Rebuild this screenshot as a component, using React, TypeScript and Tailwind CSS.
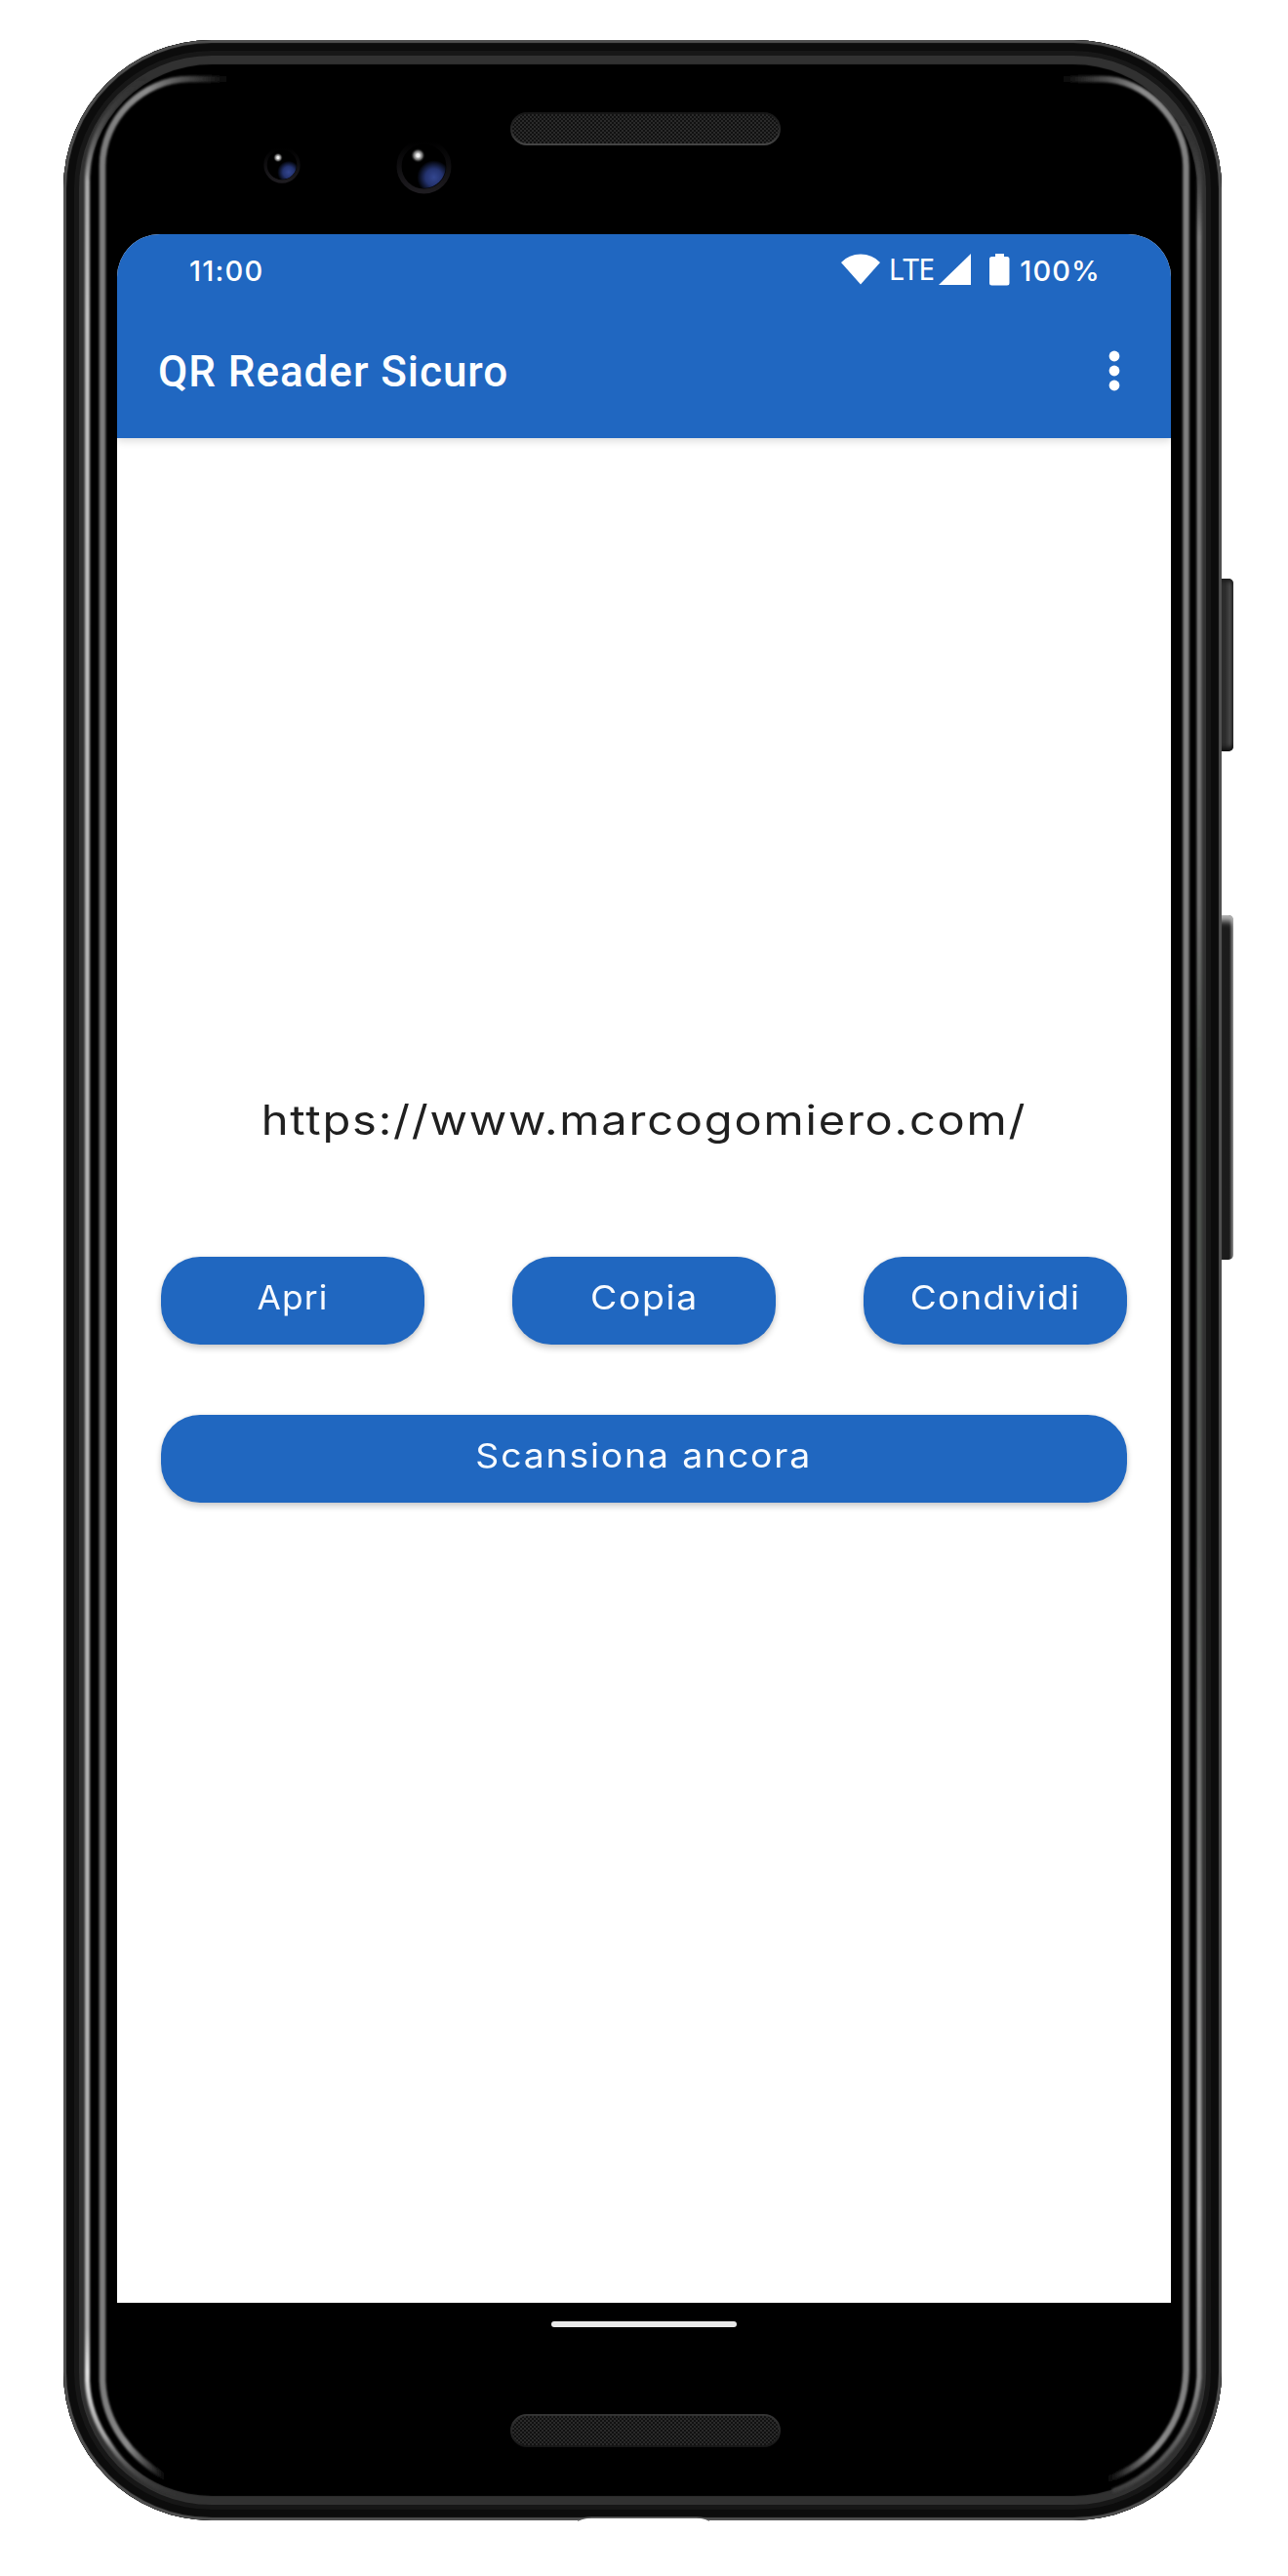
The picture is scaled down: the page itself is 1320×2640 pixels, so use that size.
import React from "react";

const highlight = {
  outerLeft: "M150 80 Q124 95 106 124 Q91 150 89.5 182 V2440 Q91 2474 112 2504 Q138 2544 180 2556",
  innerLeft: "M105 1305 V170 C105 122 146 81 194 81 H236",
  innerLeftLow: "M105 1305 V2440 C107 2484 134 2518 170 2539",
  innerRight: "M1215.5 1305 V170 C1215 122 1172 81 1130 81 H1086",
  innerRightLow: "M1215.5 1305 V2430 C1214 2484 1180 2526 1134 2541",
  outerRight: "M1210 124 Q1227 150 1229 182 V2436 Q1226 2478 1200 2510 Q1176 2540 1140 2553",
};

function FrameHighlights() {
  return (
    <svg className="pointer-events-none absolute left-0 top-0" width="1320" height="2640" viewBox="0 0 1320 2640" fill="none" aria-hidden="true">
      <defs>
        <filter id="soft" x="0" y="0" width="1320" height="2640" filterUnits="userSpaceOnUse">
          <feGaussianBlur stdDeviation="1" />
        </filter>
        <linearGradient id="ol" gradientUnits="userSpaceOnUse" x1="0" y1="75" x2="0" y2="2560">
          <stop offset="0" stopColor="#303030" stopOpacity="0" />
          <stop offset="0.045" stopColor="#a8a8a8" />
          <stop offset="0.1" stopColor="#c0c0c0" />
          <stop offset="0.4" stopColor="#b4b4b4" />
          <stop offset="0.93" stopColor="#b0b0b0" />
          <stop offset="0.948" stopColor="#e2e2e2" />
          <stop offset="0.975" stopColor="#a0a0a0" />
          <stop offset="1" stopColor="#404040" stopOpacity="0" />
        </linearGradient>
        <linearGradient id="or" gradientUnits="userSpaceOnUse" x1="0" y1="120" x2="0" y2="2560">
          <stop offset="0" stopColor="#303030" stopOpacity="0" />
          <stop offset="0.05" stopColor="#7a7a7a" />
          <stop offset="0.33" stopColor="#727272" />
          <stop offset="0.4" stopColor="#4c514c" />
          <stop offset="0.6" stopColor="#585a58" />
          <stop offset="0.88" stopColor="#aaaaaa" />
          <stop offset="0.95" stopColor="#888888" />
          <stop offset="1" stopColor="#3a3a3a" />
        </linearGradient>
        <linearGradient id="glassL" gradientUnits="userSpaceOnUse" x1="105" y1="0" x2="236" y2="0">
          <stop offset="0" stopColor="#7c7c7c" />
          <stop offset="0.35" stopColor="#8c8c8c" />
          <stop offset="0.65" stopColor="#4a4a4a" />
          <stop offset="1" stopColor="#000000" />
        </linearGradient>
        <linearGradient id="glassR" gradientUnits="userSpaceOnUse" x1="1215" y1="0" x2="1086" y2="0">
          <stop offset="0" stopColor="#808080" />
          <stop offset="0.35" stopColor="#8c8c8c" />
          <stop offset="0.65" stopColor="#4a4a4a" />
          <stop offset="1" stopColor="#000000" />
        </linearGradient>
        <linearGradient id="glassBL" gradientUnits="userSpaceOnUse" x1="105" y1="0" x2="170" y2="0">
          <stop offset="0" stopColor="#7c7c7c" />
          <stop offset="0.4" stopColor="#8a8a8a" />
          <stop offset="1" stopColor="#000000" />
        </linearGradient>
        <linearGradient id="glassBR" gradientUnits="userSpaceOnUse" x1="1215" y1="0" x2="1134" y2="0">
          <stop offset="0" stopColor="#808080" />
          <stop offset="0.4" stopColor="#8a8a8a" />
          <stop offset="1" stopColor="#000000" />
        </linearGradient>
      </defs>
      <g filter="url(#soft)">
        <path d={highlight.outerLeft} stroke="url(#ol)" strokeWidth="5" />
        <path d={highlight.outerRight} stroke="url(#or)" strokeWidth="5" />
        <path d={highlight.innerLeft} stroke="url(#glassL)" strokeWidth="6.5" />
        <path d={highlight.innerLeftLow} stroke="url(#glassBL)" strokeWidth="6.5" />
        <path d={highlight.innerRight} stroke="url(#glassR)" strokeWidth="6.5" />
        <path d={highlight.innerRightLow} stroke="url(#glassBR)" strokeWidth="6.5" />
      </g>
      {/* USB port notch */}
      <path d="M592 2583.5 Q598 2580.5 606 2580.5 H714 Q722 2580.5 727 2583.5 V2586 H592 Z" fill="#ffffff" />
      <path d="M592 2583 Q598 2580 606 2580 H714 Q722 2580 727 2583" stroke="#555555" strokeWidth="1.5" />
    </svg>
  );
}

function Camera({ size }: { size: number }) {
  const id = `cam${size}`;
  return (
    <svg width={size} height={size} viewBox="0 0 56 56" fill="none" aria-hidden="true">
      <defs>
        <radialGradient id={`${id}b`} gradientUnits="userSpaceOnUse" cx="38" cy="39" r="17">
          <stop offset="0" stopColor="#33468f" />
          <stop offset="0.5" stopColor="#24336f" />
          <stop offset="1" stopColor="#000000" />
        </radialGradient>
        <radialGradient id={`${id}w`}>
          <stop offset="0.2" stopColor="#f0f0f0" />
          <stop offset="0.6" stopColor="#999999" stopOpacity="0.7" />
          <stop offset="1" stopColor="#000000" stopOpacity="0" />
        </radialGradient>
        <linearGradient id={`${id}r`} x1="0" y1="0" x2="0" y2="1">
          <stop offset="0" stopColor="#000000" />
          <stop offset="1" stopColor="#1e1c20" />
        </linearGradient>
      </defs>
      <circle cx="28" cy="28" r="25" stroke={`url(#${id}r)`} strokeWidth="5" />
      <circle cx="28" cy="28" r="22" fill={`url(#${id}b)`} />
      <circle cx="22" cy="17" r="7.5" fill={`url(#${id}w)`} />
    </svg>
  );
}

function Speaker({ bottom = false }: { bottom?: boolean }) {
  const id = bottom ? "mesh-b" : "mesh-t";
  return (
    <svg width="277" height="34" viewBox="0 0 277 34" fill="none" aria-hidden="true">
      <defs>
        <pattern id={id} width="4" height="4" patternUnits="userSpaceOnUse">
          <rect width="4" height="4" fill="#111111" />
          <rect width="2" height="2" fill="#2a2a2a" />
          <rect x="2" y="2" width="2" height="2" fill="#2a2a2a" />
        </pattern>
        <linearGradient id={`${id}e`} x1="0" y1={bottom ? "1" : "0"} x2="0" y2={bottom ? "0" : "1"}>
          <stop offset="0" stopColor="#161616" />
          <stop offset="0.5" stopColor="#262626" />
          <stop offset="1" stopColor={bottom ? "#343434" : "#444444"} />
        </linearGradient>
      </defs>
      <rect x="1" y="1" width="275" height="32" rx="16" fill={`url(#${id})`} stroke={`url(#${id}e)`} strokeWidth="2" />
    </svg>
  );
}

function StatusBar() {
  return (
    <div className="flex h-[70px] items-center pl-[74px] pr-[72px] pt-[2px] text-[29px] font-medium leading-none text-white">
      <span className="pt-[2px] tracking-[1.2px]">11:00</span>
      <div className="ml-auto flex items-center">
        <svg width="40" height="32" viewBox="0 0 40 32" aria-hidden="true">
          <path d="M0 9 Q8 .5 20 .5 T40 9 L20 31.5 Z" fill="#fff" />
        </svg>
        <span className="ml-[9px] font-['Noto_Sans'] text-[30px] font-normal leading-none tracking-[-0.6px]">LTE</span>
        <svg className="ml-[5px]" width="34" height="32" viewBox="0 0 34 32" aria-hidden="true">
          <path d="M0 32 L33 0 V32 Z" fill="#fff" />
        </svg>
        <svg className="ml-[18px]" width="21" height="33" viewBox="0 0 21 33" aria-hidden="true">
          <path d="M6 0 H15 V3 H18 Q20.5 3 20.5 5.5 V30 Q20.5 32.5 18 32.5 H2.5 Q0 32.5 0 30 V5.5 Q0 3 2.5 3 H6 Z" fill="#fff" />
        </svg>
        <span className="ml-[10px] pt-[2px] tracking-[1.1px]">100%</span>
      </div>
    </div>
  );
}

function PillButton({ label, className, textClass }: { label: string; className: string; textClass: string }) {
  return (
    <button
      className={`flex h-[90px] items-center justify-center rounded-[40px] bg-[#2067c0] pb-[8px] text-[34px] text-[#f8fbff] shadow-[0_4px_6px_rgba(0,0,0,0.18),0_0_4px_rgba(0,0,0,0.08)] ${className}`}
    >
      <span className={`inline-block whitespace-nowrap ${textClass}`}>{label}</span>
    </button>
  );
}

export default function App() {
  return (
    <div className="relative h-[2640px] w-[1320px] overflow-hidden bg-white font-['Inter',sans-serif]">
      {/* Side keys */}
      <div className="absolute left-[1250px] top-[593px] h-[177px] w-[14px] rounded-r-[5px] bg-linear-to-r from-[#2c2c2c] from-40% via-[#464646] via-75% to-[#2a2a2a] shadow-[inset_0_6px_4px_-3px_#1c1c1c,inset_0_-6px_4px_-2px_#111]" />
      <div className="absolute left-[1250px] top-[938px] h-[353px] w-[14px] rounded-r-[5px] bg-linear-to-r from-[#1b1b1b] from-70% to-[#8c8c8c] shadow-[inset_0_9px_6px_-3px_#b4b4b4]" />

      {/* Phone body */}
      <div className="absolute left-[65px] top-[41px] h-[2542px] w-[1187px] rounded-[152px] bg-black shadow-[inset_0_0_1px_3px_#505050,inset_0_0_0_11px_#0c0c0c,inset_0_0_0_16px_#171717,inset_0_0_1px_25px_#313131]" />
      <FrameHighlights />

      <div className="absolute left-[270px] top-[150px]"><Camera size={38} /></div>
      <div className="absolute left-[406px] top-[142px]"><Camera size={57} /></div>
      <div className="absolute left-[523px] top-[115px]"><Speaker /></div>
      <div className="absolute left-[523px] top-[2474px]"><Speaker bottom /></div>
      <div className="absolute left-[565px] top-[2379px] h-[6px] w-[190px] rounded-full bg-[#e9e9e9]" />

      {/* Screen */}
      <main className="relative ml-[120px] mt-[240px] flex h-[2120px] w-[1080px] flex-col overflow-hidden rounded-t-[44px] bg-white">
        <header className="h-[209px] shrink-0 bg-[#2067c1] shadow-[0_3px_8px_rgba(0,0,0,0.14)]">
          <StatusBar />
          <div className="flex h-[139px] items-center justify-between pl-[42px] pr-[52px]">
            <h1 className="pt-[2px] font-['Roboto'] text-[44px] font-medium leading-none tracking-[0.95px] text-[#fdfeff]">
              QR Reader Sicuro
            </h1>
            <svg width="12" height="42" viewBox="0 0 12 42" fill="#fff" aria-label="Menu">
              <circle cx="6" cy="6" r="5.4" />
              <circle cx="6" cy="21" r="5.4" />
              <circle cx="6" cy="36" r="5.4" />
            </svg>
          </div>
        </header>
        <section className="flex flex-col px-[45px] pt-[669px]">
          <p className="scale-x-[1.12] text-center text-[42px] leading-[60px] tracking-[1.6px] text-[#202020]">
            https://www.marcogomiero.com/
          </p>
          <div className="mt-[110px] flex justify-between">
            <PillButton label="Apri" className="w-[270px]" textClass="scale-x-[1.04] tracking-[1px]" />
            <PillButton label="Copia" className="w-[270px]" textClass="scale-x-[1.1] tracking-[1.5px]" />
            <PillButton label="Condividi" className="w-[270px]" textClass="scale-x-[1.09] tracking-[1px]" />
          </div>
          <PillButton label="Scansiona ancora" className="mt-[72px] w-full" textClass="scale-x-[1.1] tracking-[1.65px]" />
        </section>
      </main>
    </div>
  );
}
